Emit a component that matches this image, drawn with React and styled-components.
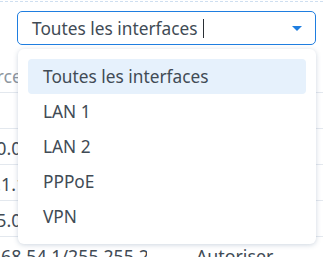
import React from 'react';
import styled, { createGlobalStyle } from 'styled-components';

const GlobalStyle = createGlobalStyle`
  html, body {
    margin: 0;
    padding: 0;
    background: #ffffff;
  }
  body {
    font-family: 'Noto Sans', 'Liberation Sans', sans-serif;
    color: #414b55;
    overflow: hidden;
  }
`;

const Page = styled.div`
  position: relative;
  width: 323px;
  height: 257px;
  overflow: hidden;
`;

const FilterBar = styled.div`
  margin-top: 1px;
  border-top: 1px dashed #cfdff0;
  padding: 9px 7px 0 17px;
  height: 45px;
  box-sizing: border-box;
`;

const Select = styled.div`
  height: 34px;
  box-sizing: border-box;
  border: 1px solid #1f7ee0;
  border-radius: 5px;
  display: flex;
  align-items: center;
  padding: 0 13px 0 14px;
  font-size: 17.3px;
  color: #414b55;
`;

const Cursor = styled.span`
  width: 1px;
  height: 19px;
  background: #2a2f35;
  margin-left: 5px;
`;

const Caret = styled.span`
  margin-left: auto;
  width: 0;
  height: 0;
  border-left: 5px solid transparent;
  border-right: 5px solid transparent;
  border-top: 5px solid #1f7ee0;
`;

const Grid = styled.div`
  margin-left: -36px;
  margin-top: 10px;
  font-size: 17.8px;
`;

const Row = styled.div`
  display: grid;
  grid-template-columns: 183px 1fr;
  column-gap: 37px;
  height: ${({ header }) => (header ? '37px' : '36px')};
  padding-top: ${({ header }) => (header ? '4px' : '2px')};
  box-sizing: border-box;
  align-items: center;
  border-bottom: 1px solid #e3e8ee;
  color: ${({ header }) => (header ? '#8e979f' : '#414b55')};
`;

const Cell = styled.div`
  padding-left: ${({ header }) => (header ? '1px' : '12px')};
  white-space: nowrap;
  overflow: hidden;
`;

const Menu = styled.div`
  position: absolute;
  left: 18px;
  top: 49px;
  width: 298px;
  box-sizing: border-box;
  padding: 10px;
  background: #ffffff;
  border-radius: 6px;
  box-shadow: 0 1px 5px rgba(60, 90, 130, 0.25);
`;

const Option = styled.div`
  height: 35px;
  display: flex;
  align-items: center;
  padding-left: 15px;
  border-radius: 4px;
  font-size: 17.3px;
  color: #414b55;
  background: ${({ active }) => (active ? '#e6f1fc' : 'transparent')};
`;

const rows = [
  { ip: '', action: '' },
  { ip: '190.0.0.0/255.0.0.0', action: '' },
  { ip: '10.1.1.1/255.255.0.0', action: '' },
  { ip: '195.0.0.0/255.255.0.0', action: '' },
  { ip: '10.68.54.1/255.255.255.0', action: 'Autoriser' },
];

const options = ['Toutes les interfaces', 'LAN 1', 'LAN 2', 'PPPoE', 'VPN'];

export default function App() {
  return (
    <Page>
      <GlobalStyle />
      <FilterBar>
        <Select>
          Toutes les interfaces
          <Cursor />
          <Caret />
        </Select>
      </FilterBar>
      <Grid>
        <Row header>
          <Cell header>Source IP</Cell>
          <Cell header>Action</Cell>
        </Row>
        {rows.map((r, i) => (
          <Row key={i}>
            <Cell>{r.ip}</Cell>
            <Cell>{r.action}</Cell>
          </Row>
        ))}
      </Grid>
      <Menu>
        {options.map((o, i) => (
          <Option key={o} active={i === 0}>
            {o}
          </Option>
        ))}
      </Menu>
    </Page>
  );
}
